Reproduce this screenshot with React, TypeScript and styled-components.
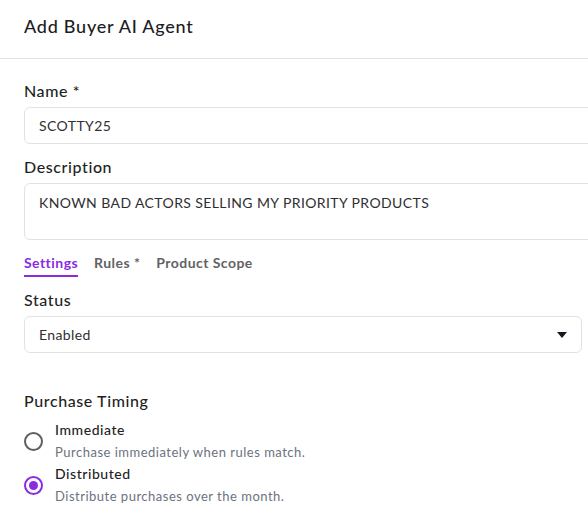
import React from "react";
import styled, { createGlobalStyle } from "styled-components";

const Global = createGlobalStyle`
  html, body { margin: 0; padding: 0; background: #ffffff; }
  body { font-family: "Lato", "Open Sans", sans-serif; overflow: hidden; }
  * { box-sizing: border-box; }
`;

const Page = styled.div`
  width: 588px;
  height: 518px;
  overflow: hidden;
  background: #fff;
`;

const Header = styled.header`
  padding: 16px 24px 22px;
  border-bottom: 1px solid #e1e4e6;
`;

const Title = styled.h1`
  margin: 0;
  font-size: 18px;
  line-height: 20px;
  font-weight: 500;
  letter-spacing: 0.75px;
  color: #1c1c24;
`;

const Body = styled.div`
  padding: 21px 24px 0;
  display: flex;
  flex-direction: column;
`;

const Field = styled.div<{ $mt?: number }>`
  display: flex;
  flex-direction: column;
  gap: 5px;
  margin-top: ${(p) => p.$mt ?? 0}px;
`;

const Label = styled.label`
  font-size: 16px;
  line-height: 22px;
  font-weight: 500;
  letter-spacing: 0.6px;
  color: #1f1f23;
`;

const Input = styled.div<{ $h: number; $w: number }>`
  width: ${(p) => p.$w}px;
  height: ${(p) => p.$h}px;
  border: 1px solid #dfe3e6;
  border-radius: 6px;
  padding: ${(p) => (p.$h > 40 ? "10px 14px" : "0 14px")};
  display: flex;
  align-items: ${(p) => (p.$h > 40 ? "flex-start" : "center")};
  justify-content: space-between;
  font-size: 14px;
  line-height: 18px;
  letter-spacing: 0.4px;
  color: #2f2f33;
  background: #fff;
`;

const Tabs = styled.div`
  display: flex;
  gap: 16px;
  margin-top: 13px;
`;

const Tab = styled.div<{ $active?: boolean }>`
  font-size: 14px;
  line-height: 20px;
  font-weight: 700;
  letter-spacing: 0.45px;
  color: ${(p) => (p.$active ? "#8a2be2" : "#626266")};
  padding-bottom: 2px;
  border-bottom: 2px solid ${(p) => (p.$active ? "#8a2be2" : "transparent")};
`;

const Arrow = styled.svg`
  width: 10px;
  height: 6px;
`;

const RadioGroup = styled.div`
  display: flex;
  flex-direction: column;
  margin-top: 7px;
`;

const RadioItem = styled.div`
  display: grid;
  grid-template-columns: 31px 1fr;
  align-items: center;
`;

const RadioCircle = styled.span<{ $checked?: boolean }>`
  width: 19px;
  height: 19px;
  border-radius: 50%;
  border: 2px solid ${(p) => (p.$checked ? "#8a2be2" : "#5f5f63")};
  display: flex;
  align-items: center;
  justify-content: center;
  &::after {
    content: "";
    width: 9px;
    height: 9px;
    border-radius: 50%;
    background: ${(p) => (p.$checked ? "#8a2be2" : "transparent")};
  }
`;

const RadioText = styled.div`
  display: flex;
  flex-direction: column;
`;

const RadioTitle = styled.span`
  font-size: 14px;
  line-height: 22px;
  font-weight: 500;
  letter-spacing: 0.55px;
  color: #1f1f23;
`;

const RadioDesc = styled.span`
  font-size: 13px;
  line-height: 22px;
  letter-spacing: 0.5px;
  color: #6b7280;
`;

const Radio = ({ title, desc, checked }: { title: string; desc: string; checked?: boolean }) => (
  <RadioItem>
    <RadioCircle $checked={checked} />
    <RadioText>
      <RadioTitle>{title}</RadioTitle>
      <RadioDesc>{desc}</RadioDesc>
    </RadioText>
  </RadioItem>
);

export default function App() {
  return (
    <Page>
      <Global />
      <Header>
        <Title>Add Buyer AI Agent</Title>
      </Header>
      <Body>
        <Field>
          <Label>Name *</Label>
          <Input $h={37} $w={600}>SCOTTY25</Input>
        </Field>
        <Field $mt={12}>
          <Label>Description</Label>
          <Input $h={57} $w={600}>KNOWN BAD ACTORS SELLING MY PRIORITY PRODUCTS</Input>
        </Field>
        <Tabs>
          <Tab $active>Settings</Tab>
          <Tab>Rules *</Tab>
          <Tab>Product Scope</Tab>
        </Tabs>
        <Field $mt={12}>
          <Label>Status</Label>
          <Input $h={37} $w={558}>
            Enabled
            <Arrow viewBox="0 0 10 6">
              <path d="M0 0h10L5 6z" fill="#1a1420" />
            </Arrow>
          </Input>
        </Field>
        <Field $mt={37}>
          <Label>Purchase Timing</Label>
        </Field>
        <RadioGroup>
          <Radio title="Immediate" desc="Purchase immediately when rules match." />
          <Radio title="Distributed" desc="Distribute purchases over the month." checked />
        </RadioGroup>
      </Body>
    </Page>
  );
}
